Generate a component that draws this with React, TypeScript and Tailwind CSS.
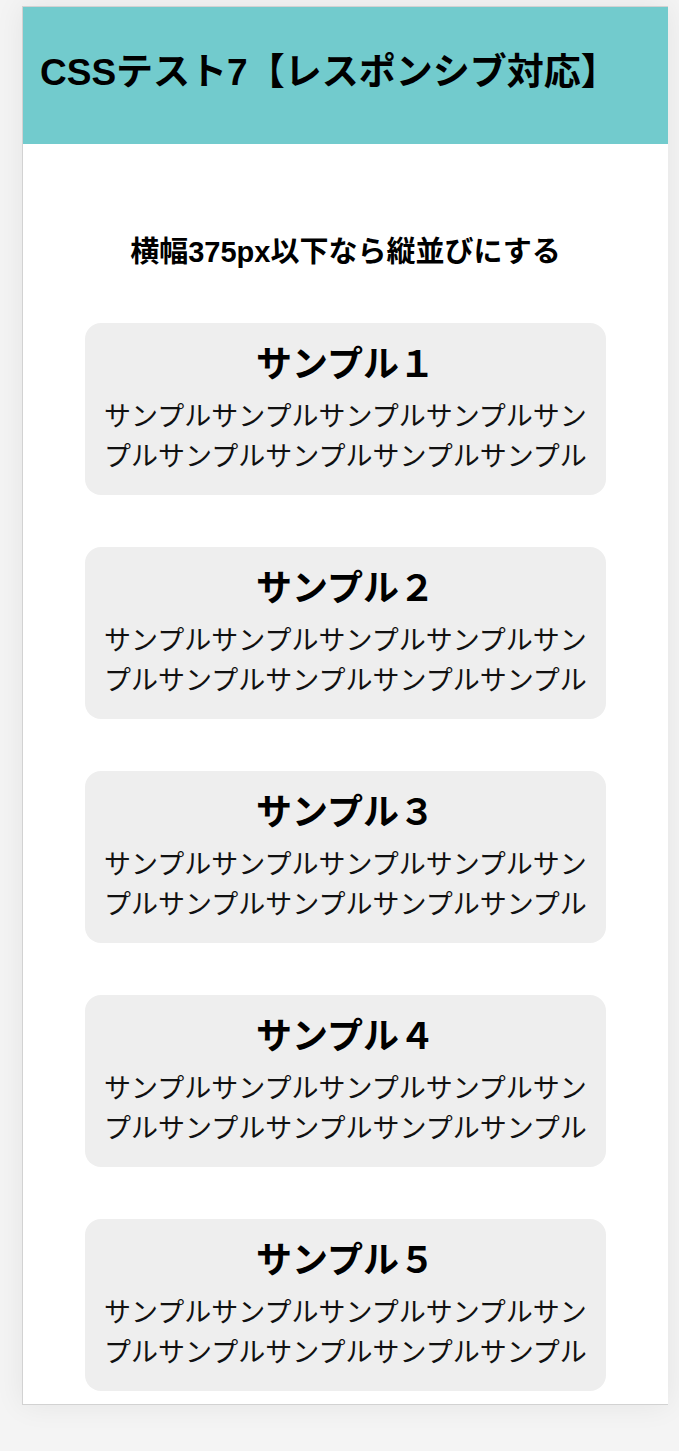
const samples = ["１", "２", "３", "４", "５"];

function Card({ n }: { n: string }) {
  return (
    <div className="w-[521px] rounded-[16px] bg-[#eeeeee] px-[16px] pt-[18px] pb-[18px] text-center">
      <h2 className="text-[36px] font-bold leading-[48px] text-black">サンプル{n}</h2>
      <p className="mt-[8px] text-[27px] leading-[40px] text-[#111]">
        サンプルサンプルサンプルサンプルサンプルサンプルサンプルサンプルサンプル
      </p>
    </div>
  );
}

export default function App() {
  return (
    <div
      className="min-h-screen bg-[#f4f4f4] pt-[6px] pl-[22px] pb-[48px]"
      style={{ fontFamily: '"Liberation Sans", "Noto Sans CJK JP", sans-serif' }}
    >
      <div className="w-[646px] border border-r-0 border-[#d2d2d2] bg-white shadow-[0_0_28px_rgba(0,0,0,0.07)]">
        <header className="flex h-[137px] items-center bg-[#72cbcd] pl-[17px] pb-[6px]">
          <h1 className="text-[37px] font-bold leading-[54px] text-black">
            CSSテスト7【レスポンシブ対応】
          </h1>
        </header>

        <main className="flex flex-col items-center pt-[87px] pb-[13px]">
          <p className="text-[29px] font-bold leading-[42px] text-black">
            横幅375px以下なら縦並びにする
          </p>
          <div className="mt-[50px] flex flex-col gap-[52px]">
            {samples.map((n) => (
              <Card key={n} n={n} />
            ))}
          </div>
        </main>
      </div>
    </div>
  );
}
